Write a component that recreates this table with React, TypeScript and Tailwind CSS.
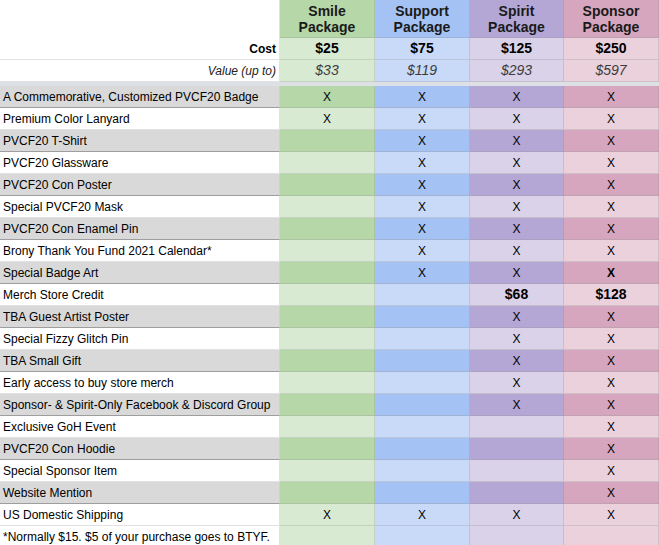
import React from "react";

type Mark = "" | "X" | "XB" | string;

const packages = [
    {name: "Smile", cost: "$25", value: "$33", dark: "bg-[#b6d7a8]", light: "bg-[#d9ead3]"},
    {name: "Support", cost: "$75", value: "$119", dark: "bg-[#a4c2f4]", light: "bg-[#c9daf8]"},
    {name: "Spirit", cost: "$125", value: "$293", dark: "bg-[#b4a7d6]", light: "bg-[#d9d2e9]"},
    {name: "Sponsor", cost: "$250", value: "$597", dark: "bg-[#d5a6bd]", light: "bg-[#ead1dc]"},
];

const rows: {label: string; marks: Mark[]}[] = [
    {label: "A Commemorative, Customized PVCF20 Badge", marks: ["X", "X", "X", "X"]},
    {label: "Premium Color Lanyard", marks: ["X", "X", "X", "X"]},
    {label: "PVCF20 T-Shirt", marks: ["", "X", "X", "X"]},
    {label: "PVCF20 Glassware", marks: ["", "X", "X", "X"]},
    {label: "PVCF20 Con Poster", marks: ["", "X", "X", "X"]},
    {label: "Special PVCF20 Mask", marks: ["", "X", "X", "X"]},
    {label: "PVCF20 Con Enamel Pin", marks: ["", "X", "X", "X"]},
    {label: "Brony Thank You Fund 2021 Calendar*", marks: ["", "X", "X", "X"]},
    {label: "Special Badge Art", marks: ["", "X", "X", "XB"]},
    {label: "Merch Store Credit", marks: ["", "", "$68", "$128"]},
    {label: "TBA Guest Artist Poster", marks: ["", "", "X", "X"]},
    {label: "Special Fizzy Glitch Pin", marks: ["", "", "X", "X"]},
    {label: "TBA Small Gift", marks: ["", "", "X", "X"]},
    {label: "Early access to buy store merch", marks: ["", "", "X", "X"]},
    {label: "Sponsor- & Spirit-Only Facebook & Discord Group", marks: ["", "", "X", "X"]},
    {label: "Exclusive GoH Event", marks: ["", "", "", "X"]},
    {label: "PVCF20 Con Hoodie", marks: ["", "", "", "X"]},
    {label: "Special Sponsor Item", marks: ["", "", "", "X"]},
    {label: "Website Mention", marks: ["", "", "", "X"]},
    {label: "US Domestic Shipping", marks: ["X", "X", "X", "X"]},
];

const colW = ["w-[95px]", "w-[95px]", "w-[94px]", "w-[95px]"];
const cellBorder = "border-r border-b border-[rgba(150,150,150,0.3)]";

function MarkText({m}: {m: Mark}) {
    if (!m) return null;
    if (m === "X") return <span className="text-[12px]">X</span>;
    if (m === "XB") return <span className="text-[12px] font-bold">X</span>;
    return <span className="text-[14px] font-bold">{m}</span>;
}

export default function App() {
    return (
        <div className="w-[659px] h-[545px] overflow-hidden bg-white text-black font-['Liberation_Sans',Arial,sans-serif]">
            {/* header */}
            <div className="flex h-[38px]">
                <div className="w-[280px] border-r border-[#e2e2e2]"/>
                {packages.map((p, i) => (
                    <div key={p.name}
                         className={`${colW[i]} ${p.dark} ${cellBorder} flex flex-col items-center justify-center text-[14px] font-bold leading-[16px] text-[#1a1a1a]`}>
                        <span>{p.name}</span>
                        <span>Package</span>
                    </div>
                ))}
            </div>
            {/* cost */}
            <div className="flex h-[22px]">
                <div className="w-[280px] border-b border-r border-[#e2e2e2] flex items-center justify-end pr-[3px] text-[12px] font-bold">
                    Cost
                </div>
                {packages.map((p, i) => (
                    <div key={p.name}
                         className={`${colW[i]} ${p.light} ${cellBorder} flex items-center justify-center text-[14px] font-bold`}>
                        {p.cost}
                    </div>
                ))}
            </div>
            {/* value */}
            <div className="flex h-[22px]">
                <div className="w-[280px] border-b border-r border-[#e2e2e2] flex items-center justify-end pr-[3px] text-[12px] italic text-[#222]">
                    Value (up to)
                </div>
                {packages.map((p, i) => (
                    <div key={p.name}
                         className={`${colW[i]} ${p.light} ${cellBorder} flex items-center justify-center text-[14px] italic text-[#3c3c3c]`}>
                        {p.value}
                    </div>
                ))}
            </div>
            <div className="h-[4px] bg-[#dde0e5]"/>
            {rows.map((r, ri) => {
                const gray = ri % 2 === 0;
                return (
                    <div key={r.label} className="flex h-[22px]">
                        <div
                            className={`w-[280px] border-r border-b flex items-center pl-[3px] text-[12px] whitespace-nowrap ${gray ? "bg-[#d9d9d9] border-b-[#9e9e9e] border-r-[#d0d0d0]" : "bg-white border-[#e2e2e2]"}`}>
                            {r.label}
                        </div>
                        {packages.map((p, i) => (
                            <div key={p.name}
                                 className={`${colW[i]} ${gray ? p.dark : p.light} ${cellBorder} flex items-center justify-center`}>
                                <MarkText m={r.marks[i]}/>
                            </div>
                        ))}
                    </div>
                );
            })}
            {/* note */}
            <div className="flex h-[22px]">
                <div className="w-[280px] border-r border-[#e2e2e2] flex items-center pl-[3px] text-[12px] whitespace-nowrap">
                    *Normally $15. $5 of your purchase goes to BTYF.
                </div>
                {packages.map((p, i) => (
                    <div key={p.name} className={`${colW[i]} ${p.light} border-r border-[rgba(150,150,150,0.3)]`}/>
                ))}
            </div>
        </div>
    );
}
